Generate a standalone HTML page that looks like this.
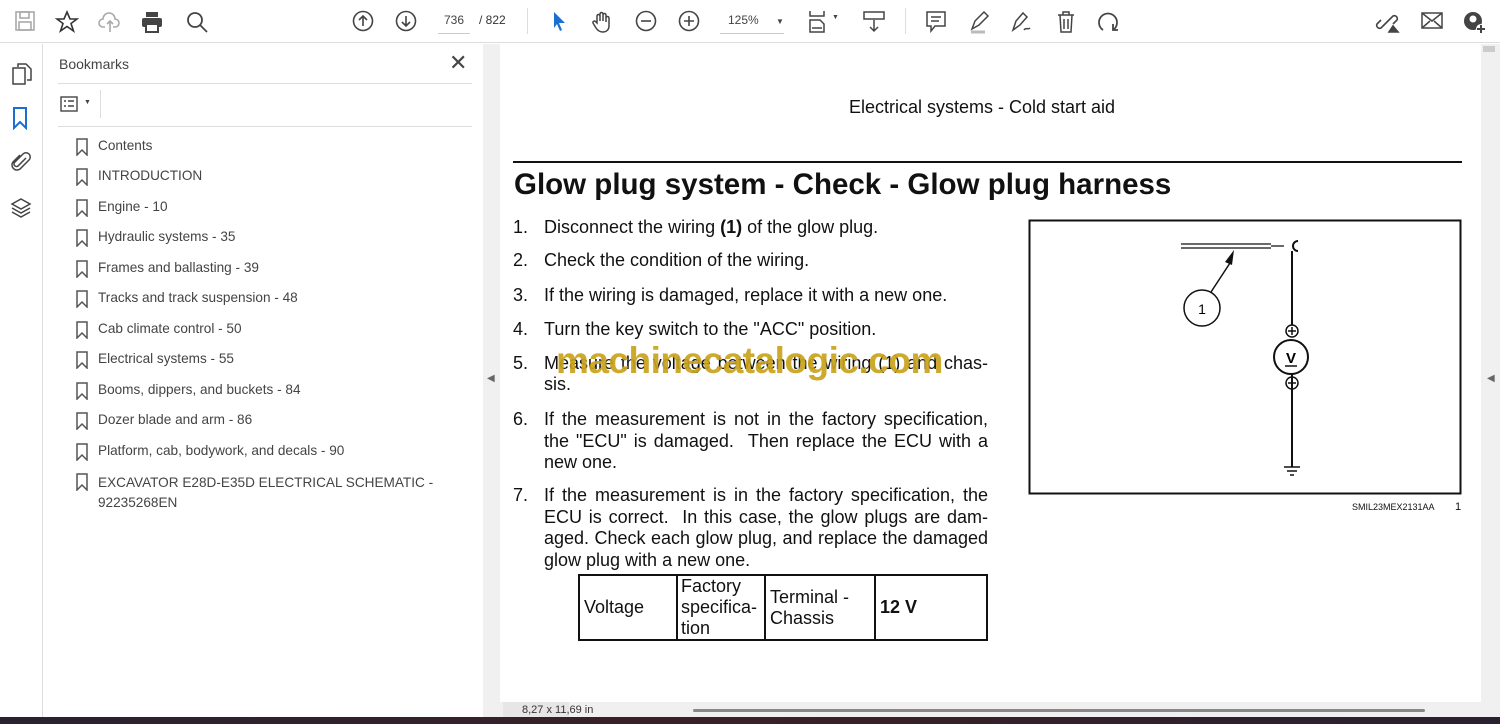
<!DOCTYPE html>
<html><head><meta charset="utf-8"><style>
*{margin:0;padding:0;box-sizing:border-box}
body{width:1500px;height:724px;overflow:hidden;background:#fff;font-family:"Liberation Sans",sans-serif;position:relative}
.a{position:absolute}
.tb{left:0;top:0;width:1500px;height:43px;background:#fff;border-bottom:1px solid #ddd}
.ic{position:absolute;top:10px}
.side{left:0;top:44px;width:43px;height:673px;background:#fff;border-right:1px solid #ddd}
.bm{left:44px;top:44px;width:439px;height:673px;background:#fff}
.gut{left:483px;top:44px;width:17px;height:673px;background:#f0f0f0}
.rgut{left:1481px;top:44px;width:19px;height:673px;background:#f0f0f0}
.page{left:500px;top:44px;width:981px;height:658px;background:#fff}
.bi{position:absolute;left:76px;font-size:13.6px;color:#444}
.bi svg{position:absolute;left:0;top:0}
.bi span{margin-left:22px;display:block}
.t{position:absolute;font-size:18px;color:#111;line-height:21.5px;text-align:justify}
.n{position:absolute;left:513px;font-size:18px;color:#111}
</style></head><body>
<div class="a tb">
<svg class="ic" style="left:14px" width="22" height="22" fill="none" stroke="#aaa" stroke-width="1.6"><rect x="2" y="2" width="18" height="18"/><rect x="6" y="2" width="9" height="6"/><rect x="5" y="12" width="12" height="8"/></svg>
<svg class="ic" style="left:55px" width="24" height="24" fill="none" stroke="#333" stroke-width="1.6"><path d="M12 2l3 7h7l-6 4.5 2.5 7.5-6.5-4.5-6.5 4.5 2.5-7.5-6-4.5h7z"/></svg>
<svg class="ic" style="left:98px" width="24" height="24" fill="none" stroke="#aaa" stroke-width="1.6"><path d="M7 17H5a4 4 0 010-8 6 6 0 0112 0 4 4 0 010 8h-2M12 22V11m-3 3l3-3 3 3"/></svg>
<svg class="ic" style="left:140px" width="24" height="24" fill="#444"><rect x="6" y="2" width="12" height="5"/><rect x="2" y="8" width="20" height="9" rx="2"/><rect x="6" y="14" width="12" height="8" fill="#fff" stroke="#444" stroke-width="2"/></svg>
<svg class="ic" style="left:185px" width="24" height="24" fill="none" stroke="#444" stroke-width="1.8"><circle cx="10" cy="10" r="7"/><path d="M15 15l7 7"/></svg>
<svg class="ic" style="left:352px" width="22" height="22" fill="none" stroke="#444" stroke-width="1.6"><circle cx="11" cy="11" r="9.5"/><path d="M11 16V6m-4 4l4-4 4 4"/></svg>
<svg class="ic" style="left:395px" width="22" height="22" fill="none" stroke="#444" stroke-width="1.6"><circle cx="11" cy="11" r="9.5"/><path d="M11 6v10m-4-4l4 4 4-4"/></svg>
<div class="a" style="left:438px;top:13px;width:32px;font-size:12px;color:#444;text-align:center;border-bottom:1px solid #ccc;padding-bottom:6px">736</div>
<div class="a" style="left:479px;top:13px;font-size:12px;color:#333">/ 822</div>
<div class="a" style="left:527px;top:8px;width:1px;height:26px;background:#ddd"></div>
<svg class="ic" style="left:550px" width="20" height="24"><path d="M4 2l11 11h-6l3 7-2 1-3-7-3 4z" fill="#1a6fd0"/></svg>
<svg class="ic" style="left:590px" width="24" height="24" fill="none" stroke="#444" stroke-width="1.5"><path d="M7 13V6a1.5 1.5 0 013 0v5V4a1.5 1.5 0 013 0v7V5a1.5 1.5 0 013 0v7-4a1.5 1.5 0 013 0v8c0 4-3 6-6 6s-5-1-7-4l-3-5a1.5 1.5 0 012.5-1.5z"/></svg>
<svg class="ic" style="left:635px" width="22" height="22" fill="none" stroke="#444" stroke-width="1.6"><circle cx="11" cy="11" r="9.5"/><path d="M6 11h10"/></svg>
<svg class="ic" style="left:678px" width="22" height="22" fill="none" stroke="#444" stroke-width="1.6"><circle cx="11" cy="11" r="9.5"/><path d="M6 11h10M11 6v10"/></svg>
<div class="a" style="left:720px;top:13px;width:64px;font-size:12px;color:#444;border-bottom:1px solid #ccc;padding-bottom:6px;padding-left:8px">125% <span style="font-size:8px;margin-left:14px">▼</span></div>
<svg class="ic" style="left:808px" width="22" height="24" fill="none" stroke="#444" stroke-width="1.5"><path d="M2 1v5h14V1M2 22v-12h10l4 4v8zM4 18h10"/></svg><span class="a" style="left:832px;top:14px;font-size:7px;color:#444">▼</span>
<svg class="ic" style="left:862px" width="24" height="24" fill="none" stroke="#444" stroke-width="1.5"><rect x="2" y="2" width="20" height="7"/><path d="M12 10v11m-4-4l4 4 4-4"/></svg>
<div class="a" style="left:905px;top:8px;width:1px;height:26px;background:#ddd"></div>
<svg class="ic" style="left:925px" width="22" height="24" fill="none" stroke="#444" stroke-width="1.5"><path d="M2 2h18v14H10l-4 5v-5H2z M6 7h10M6 11h8"/></svg>
<svg class="ic" style="left:968px" width="24" height="24" fill="none" stroke="#444" stroke-width="1.5"><path d="M4 19l3-8 9-9 4 4-9 9z"/><path d="M3 22h14" stroke="#bbb" stroke-width="3"/></svg>
<svg class="ic" style="left:1010px" width="26" height="24" fill="none" stroke="#444" stroke-width="1.5"><path d="M3 20l3-9 7-8 4 4-7 8zM14 20c2-3 4 0 6-2"/></svg>
<svg class="ic" style="left:1055px" width="22" height="24" fill="none" stroke="#444" stroke-width="1.5"><path d="M3 5h16M8 5V2h6v3M5 5l1 17h10l1-17M9 9v10M13 9v10"/></svg>
<svg class="ic" style="left:1096px" width="24" height="24" fill="none" stroke="#444" stroke-width="1.8"><path d="M7 20a9 9 0 1110 0M17 14v6h5"/></svg>
<svg class="ic" style="left:1375px" width="26" height="24" fill="none" stroke="#444" stroke-width="1.6"><path d="M10 14l-4 4a3 3 0 01-4-4l4-4M14 10l4-4a3 3 0 014 4l-4 4M8 16l8-8"/><path d="M14 22l4-6 5 6z" fill="#444"/></svg>
<svg class="ic" style="left:1420px" width="24" height="22" fill="none" stroke="#444" stroke-width="1.5"><rect x="2" y="3" width="20" height="15"/><path d="M2 3l10 8 10-8M2 18l8-7M22 18l-8-7"/></svg>
<svg class="ic" style="left:1462px" width="26" height="26"><circle cx="11" cy="11" r="9" fill="#444"/><circle cx="11" cy="9" r="3.5" fill="#fff"/><circle cx="19" cy="19" r="5" fill="#fff"/><path d="M19 15v8M15 19h8" stroke="#444" stroke-width="2"/></svg>
</div>
<div class="a side">
<svg class="a" style="left:11px;top:18px" width="22" height="24" fill="none" stroke="#444" stroke-width="1.5"><path d="M7 5V2h8l5 5v11h-4M2 6h12v16H2z"/></svg>
<svg class="a" style="left:11px;top:62px" width="18" height="24" fill="none" stroke="#1a6fd0" stroke-width="2"><path d="M3 2h12v20l-6-6-6 6z"/></svg>
<svg class="a" style="left:10px;top:106px" width="22" height="24" fill="none" stroke="#444" stroke-width="1.5"><path d="M16 8l-8 8a2.5 2.5 0 01-3.5-3.5L13 4a4 4 0 016 6l-9 9a5 5 0 01-7-7l7-7"/></svg>
<svg class="a" style="left:10px;top:152px" width="22" height="24" fill="none" stroke="#444" stroke-width="1.5"><path d="M11 3l9 5-9 5-9-5zM2 12l9 5 9-5M2 16l9 5 9-5"/></svg>
</div>
<div class="a bm">
<div class="a" style="left:15px;top:12px;font-size:14px;color:#444">Bookmarks</div>
<div class="a" style="left:405px;top:6px;font-size:22px;color:#444">✕</div>
<div class="a" style="left:14px;top:39px;width:414px;height:1px;background:#ddd"></div>
<svg class="a" style="left:16px;top:52px" width="18" height="16" fill="none" stroke="#444" stroke-width="1.4"><rect x="1" y="1" width="16" height="14"/><path d="M4 5h2M8 5h6M4 10h2M8 10h6"/></svg>
<span class="a" style="left:40px;top:55px;font-size:7px;color:#444">▼</span>
<div class="a" style="left:56px;top:46px;width:1px;height:28px;background:#ddd"></div>
<div class="a" style="left:14px;top:82px;width:414px;height:1px;background:#ddd"></div>
</div>
<div class="bi" style="top:138px"><svg width="12" height="18" fill="none" stroke="#555" stroke-width="1.5"><path d="M1 1h10v16l-5-5-5 5z"/></svg><span>Contents</span></div>
<div class="bi" style="top:168px"><svg width="12" height="18" fill="none" stroke="#555" stroke-width="1.5"><path d="M1 1h10v16l-5-5-5 5z"/></svg><span>INTRODUCTION</span></div>
<div class="bi" style="top:199px"><svg width="12" height="18" fill="none" stroke="#555" stroke-width="1.5"><path d="M1 1h10v16l-5-5-5 5z"/></svg><span>Engine - 10</span></div>
<div class="bi" style="top:229px"><svg width="12" height="18" fill="none" stroke="#555" stroke-width="1.5"><path d="M1 1h10v16l-5-5-5 5z"/></svg><span>Hydraulic systems - 35</span></div>
<div class="bi" style="top:260px"><svg width="12" height="18" fill="none" stroke="#555" stroke-width="1.5"><path d="M1 1h10v16l-5-5-5 5z"/></svg><span>Frames and ballasting - 39</span></div>
<div class="bi" style="top:290px"><svg width="12" height="18" fill="none" stroke="#555" stroke-width="1.5"><path d="M1 1h10v16l-5-5-5 5z"/></svg><span>Tracks and track suspension - 48</span></div>
<div class="bi" style="top:321px"><svg width="12" height="18" fill="none" stroke="#555" stroke-width="1.5"><path d="M1 1h10v16l-5-5-5 5z"/></svg><span>Cab climate control - 50</span></div>
<div class="bi" style="top:351px"><svg width="12" height="18" fill="none" stroke="#555" stroke-width="1.5"><path d="M1 1h10v16l-5-5-5 5z"/></svg><span>Electrical systems - 55</span></div>
<div class="bi" style="top:382px"><svg width="12" height="18" fill="none" stroke="#555" stroke-width="1.5"><path d="M1 1h10v16l-5-5-5 5z"/></svg><span>Booms, dippers, and buckets - 84</span></div>
<div class="bi" style="top:412px"><svg width="12" height="18" fill="none" stroke="#555" stroke-width="1.5"><path d="M1 1h10v16l-5-5-5 5z"/></svg><span>Dozer blade and arm - 86</span></div>
<div class="bi" style="top:443px"><svg width="12" height="18" fill="none" stroke="#555" stroke-width="1.5"><path d="M1 1h10v16l-5-5-5 5z"/></svg><span>Platform, cab, bodywork, and decals - 90</span></div>
<div class="bi" style="top:473px;line-height:20px"><svg width="12" height="18" fill="none" stroke="#555" stroke-width="1.5"><path d="M1 1h10v16l-5-5-5 5z"/></svg><span>EXCAVATOR E28D-E35D ELECTRICAL SCHEMATIC -<br>92235268EN</span></div>
<div class="a gut"><span class="a" style="left:4px;top:329px;font-size:10px;color:#666">◀</span></div>
<div class="a rgut"><div class="a" style="left:2px;top:2px;width:12px;height:6px;background:#ccc"></div><span class="a" style="left:6px;top:329px;font-size:10px;color:#666">◀</span><div class="a" style="left:-8px;top:560px;width:2px;height:18px;background:#555"></div></div>
<div class="a page"></div>
<div class="a" style="left:849px;top:97px;font-size:18px;color:#111">Electrical systems - Cold start aid</div>
<div class="a" style="left:513px;top:161px;width:949px;height:2px;background:#111"></div>
<div class="a" style="left:514px;top:168px;font-size:29.5px;font-weight:bold;color:#111">Glow plug system - Check - Glow plug harness</div>
<div class="n" style="top:217px">1.</div><div class="t" style="left:544px;top:217px">Disconnect the wiring <b>(1)</b> of the glow plug.</div>
<div class="n" style="top:250px">2.</div><div class="t" style="left:544px;top:250px">Check the condition of the wiring.</div>
<div class="n" style="top:285px">3.</div><div class="t" style="left:544px;top:285px">If the wiring is damaged, replace it with a new one.</div>
<div class="n" style="top:319px">4.</div><div class="t" style="left:544px;top:319px">Turn the key switch to the "ACC" position.</div>
<div class="n" style="top:353px">5.</div><div class="t" style="left:544px;top:353px;width:444px;text-align:justify;text-align-last:justify">Measure the voltage between the wiring (1) and chas-</div><div class="t" style="left:544px;top:374px">sis.</div>
<div class="a" style="left:556px;top:340px;font-size:37px;font-weight:bold;color:#c9a31c;opacity:.92;letter-spacing:-0.5px">machinecatalogic.com</div>
<div class="n" style="top:409px">6.</div><div class="t" style="left:544px;top:409px;width:444px">If the measurement is not in the factory specification, the "ECU" is damaged. &nbsp;Then replace the ECU with a new one.</div>
<div class="n" style="top:485px">7.</div><div class="t" style="left:544px;top:485px;width:444px">If the measurement is in the factory specification, the ECU is correct. &nbsp;In this case, the glow plugs are dam-aged. Check each glow plug, and replace the damaged glow plug with a new one.</div>
<table class="a" style="left:578px;top:574px;width:410px;height:67px;border-collapse:collapse;font-size:18px;color:#111;line-height:21px">
<tr><td style="border:2px solid #111;width:98px;padding-left:4px">Voltage</td><td style="border:2px solid #111;width:88px;padding-left:3px">Factory specifica-tion</td><td style="border:2px solid #111;width:110px;padding-left:4px">Terminal - Chassis</td><td style="border:2px solid #111;padding-left:4px;font-weight:bold">12 V</td></tr></table>
<svg class="a" style="left:1028px;top:219px" width="440" height="300">
<rect x="1.5" y="1.5" width="431" height="273" fill="none" stroke="#111" stroke-width="2"/>
<path d="M153 25h90M153 29h90M243 27h13" stroke="#111" stroke-width="1.3"/>
<path d="M270 22a5 5 0 100 10" fill="none" stroke="#111" stroke-width="2"/>
<path d="M264 32v74M264 148v100" stroke="#111" stroke-width="2"/>
<circle cx="264" cy="112" r="6" fill="none" stroke="#111" stroke-width="1.5"/><path d="M260 112h8M264 108v8" stroke="#111" stroke-width="1.5"/>
<circle cx="263" cy="138" r="17" fill="#fff" stroke="#111" stroke-width="2"/>
<text x="263" y="144" font-size="15" font-weight="bold" text-anchor="middle" font-family="Liberation Sans">V</text><path d="M257 147h12" stroke="#111" stroke-width="1.5"/>
<circle cx="264" cy="164" r="6" fill="none" stroke="#111" stroke-width="1.5"/><path d="M260 164h8" stroke="#111" stroke-width="1.5"/>
<path d="M256 248h16M259 252h10M262 256h4" stroke="#111" stroke-width="1.5"/>
<circle cx="174" cy="89" r="18" fill="none" stroke="#111" stroke-width="1.5"/>
<text x="174" y="95" font-size="14" text-anchor="middle" font-family="Liberation Sans">1</text>
<path d="M183 73l19-29" stroke="#111" stroke-width="1.5"/><path d="M206 31l-9 12 7 3z" fill="#111"/>
<text x="324" y="291" font-size="9" font-family="Liberation Sans" fill="#111">SMIL23MEX2131AA</text>
<text x="427" y="291" font-size="11" font-family="Liberation Sans" fill="#111">1</text>
</svg>
<div class="a" style="left:500px;top:702px;width:981px;height:15px;background:#f0f0f0"></div>
<div class="a" style="left:503px;top:702px;width:66px;height:15px;background:#e6e6e6;font-size:11px;color:#333;padding-left:19px;line-height:17px;white-space:nowrap;overflow:visible">8,27 x 11,69 in</div>
<div class="a" style="left:693px;top:709px;width:732px;height:3px;background:#888;border-radius:2px"></div>
<div class="a" style="left:0;top:717px;width:1500px;height:7px;background:linear-gradient(90deg,#2a2230,#3a2028,#2a2030)"></div>
</body></html>
